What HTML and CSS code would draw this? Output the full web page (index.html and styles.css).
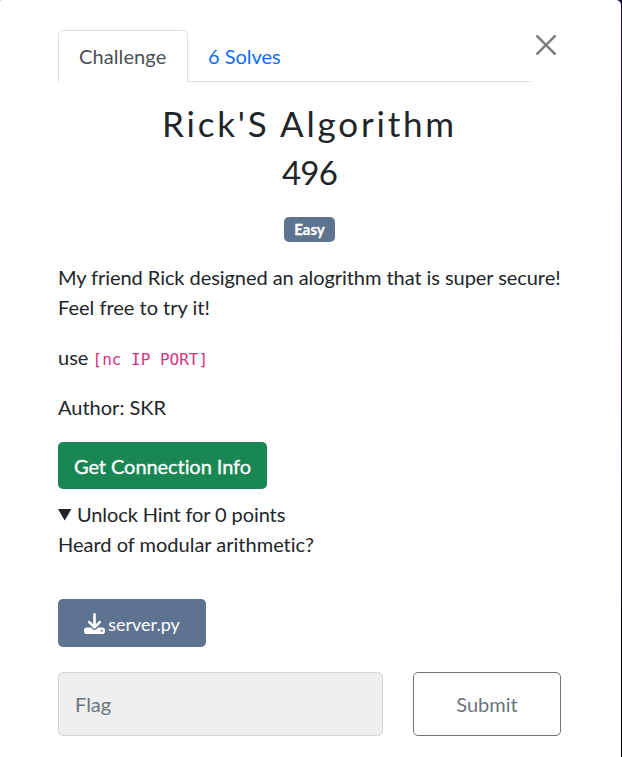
FILE: index.html
```html
<!DOCTYPE html>
<html lang="en">
<head>
<meta charset="utf-8">
<title>Challenge</title>
<link rel="stylesheet" href="styles.css">
</head>
<body>
<main class="modal">
  <header class="head">
    <nav class="tabs">
      <a class="tab active">Challenge</a>
      <a class="tab">6 Solves</a>
    </nav>
    <button class="close" aria-label="Close">
      <svg viewBox="0 0 16 16" width="20" height="20"><path d="M.293.293a1 1 0 0 1 1.414 0L8 6.586 14.293.293a1 1 0 1 1 1.414 1.414L9.414 8l6.293 6.293a1 1 0 0 1-1.414 1.414L8 9.414l-6.293 6.293a1 1 0 0 1-1.414-1.414L6.586 8 .293 1.707a1 1 0 0 1 0-1.414z"/></svg>
    </button>
  </header>
  <h2 class="name">Rick'S Algorithm</h2>
  <h3 class="value">496</h3>
  <div class="tags"><span class="badge">Easy</span></div>
  <section class="desc">
    <p><span class="long">My friend Rick designed an alogrithm that is super secure!</span><br>Feel free to try it!</p>
    <p>use <code>[nc IP PORT]</code></p>
    <p>Author: SKR</p>
  </section>
  <button class="btn connect">Get Connection Info</button>
  <div class="hint">
    <div class="summary"><svg class="marker" viewBox="0 0 14 12" width="14" height="12"><path d="M0 0h13.400L6.700 11.600z"/></svg><span>Unlock Hint for 0 points</span></div>
    <div>Heard of modular arithmetic?</div>
  </div>
  <a class="btn file"><svg viewBox="0 0 512 512" width="21" height="21"><path d="M288 32c0-17.700-14.300-32-32-32s-32 14.300-32 32v242.700l-73.400-73.400c-12.500-12.500-32.800-12.500-45.300 0s-12.500 32.800 0 45.300l128 128c12.500 12.500 32.800 12.500 45.300 0l128-128c12.500-12.500 12.500-32.800 0-45.300s-32.800-12.500-45.300 0L288 274.700V32zM64 352c-35.300 0-64 28.700-64 64v32c0 35.300 28.700 64 64 64h384c35.300 0 64-28.700 64-64v-32c0-35.300-28.700-64-64-64H346.500l-45.300 45.300c-25 25-65.500 25-90.500 0L165.500 352H64zm368 56a24 24 0 1 1 0 48 24 24 0 1 1 0-48z"/></svg><span>server.py</span></a>
  <form class="submit-row">
    <input class="flag" type="text" placeholder="Flag">
    <button class="submit" type="button">Submit</button>
  </form>
</main>
</body>
</html>
```
FILE: styles.css
```css
* { box-sizing: border-box; }
body {
  margin: 0;
  background: linear-gradient(#1a0536, #050008 80%);
  color: #212529;
  font: 20px/30px Lato, sans-serif;
  font-variant-ligatures: none;
  overflow: hidden;
}
.modal {
  width: 621px;
  height: 757px;
  padding: 30px 60px 0 58px;
  background: #fff;
  border-radius: 1px 5px 0 0;
}
button, input { font: inherit; font-variant-ligatures: none; }
.head { display: flex; align-items: flex-start; }
.tabs { display: flex; width: 473px; height: 52px; border-bottom: 1px solid #dee2e6; }
.tab {
  height: 52px;
  padding: 10px 20px;
  border: 1px solid transparent;
  border-bottom: 0;
  color: #0d6efd;
}
.tab + .tab { padding-left: 19px; letter-spacing: -.02px; }
.active { width: 130px; color: #495057; background: #fff; border-color: #dee2e6; border-radius: 5px 5px 0 0; letter-spacing: .1px; }
.close { display: flex; margin: 5px 0 0 5px; padding: 0; border: 0; background: none; opacity: .5; }
h2, h3, p { margin: 0; }
.name { margin-top: 20px; font-size: 35px; line-height: 42px; font-weight: 400; letter-spacing: 2.8px; text-align: center; }
.value { margin-top: 7px; font-size: 33px; line-height: 42px; font-weight: 400; letter-spacing: -.8px; text-align: center; }
.tags { display: flex; justify-content: center; margin-top: 24px; }
.badge {
  height: 25px;
  padding: 0 10px;
  border-radius: 5px;
  background: #5e7390;
  color: #fff;
  font-size: 15px;
  line-height: 25px;
  font-weight: 700;
  -webkit-text-stroke: .3px #fff;
}
.desc { display: grid; gap: 20px; margin-top: 20px; white-space: nowrap; }
.long { letter-spacing: -.06px; }
code { color: #d63384; font: 16px "DejaVu Sans Mono", monospace; line-height: 1; margin-left: -1px; }
.btn { display: flex; align-items: center; justify-content: center; border: 0; border-radius: 5px; color: #fff; }
.connect { width: 209px; height: 47px; margin-top: 20px; padding: 0; background: #198754; letter-spacing: -.07px; -webkit-text-stroke: .3px #fff; }
.hint { margin-top: 10px; }
.summary { display: flex; align-items: center; letter-spacing: -.1px; }
.marker { margin: 2px 5px 0 0; fill: #212529; }
.file { width: 148px; height: 48px; margin-top: 40px; gap: 3px; background: #5e7390; font-size: 18px; }
.file svg { fill: #fff; }
.file span { padding-top: 1px; }
.submit-row { display: flex; gap: 30px; margin-top: 25px; }
.flag { width: 325px; height: 64px; padding: 0 16px; border: 1px solid #ced4da; border-radius: 5px; background: #efefef; }
.flag::placeholder { color: #6c757d; }
.submit { width: 148px; height: 64px; padding: 0; border: 1px solid #6c757d; border-radius: 5px; background: #fff; color: #6c757d; }
```
